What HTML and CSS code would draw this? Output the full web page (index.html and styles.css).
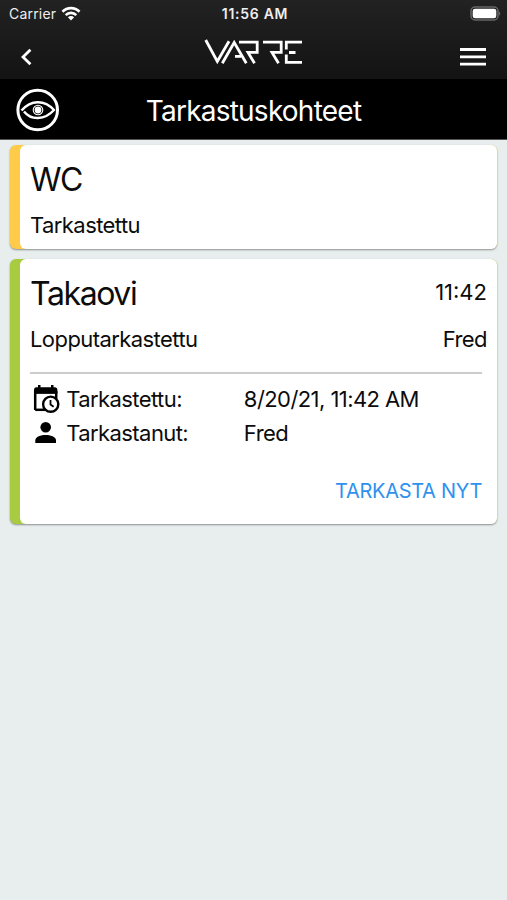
FILE: index.html
```html
<!DOCTYPE html>
<html lang="fi">
<head>
<meta charset="utf-8">
<title>Tarkastuskohteet</title>
<link rel="stylesheet" href="styles.css">
</head>
<body>
<header class="top">
  <div class="status">
    <div class="carrier"><span>Carrier</span>
      <svg width="20" height="16" viewBox="0 0 20 16"><g fill="none" stroke="#fff" stroke-width="2.7"><path d="M1.5 5.8C6.3 1 13.7 1 18.5 5.8"/><path d="M4.7 9.1C7.7 6.2 12.3 6.2 15.3 9.1"/></g><path fill="#fff" d="M6.9 11.3C8.7 9.7 11.3 9.7 13.1 11.3L10 14.5Z"/></svg>
    </div>
    <span class="clock">11:56 AM</span>
    <svg class="battery" width="31" height="16" viewBox="0 0 31 16"><rect x="1" y="1" width="27" height="13" rx="4" fill="none" stroke="#666" stroke-width="1.5"/><rect x="2.7" y="2.7" width="23.6" height="9.6" rx="2.4" fill="#fff"/><path d="M29.2 5.2q2 2.3 0 4.6z" fill="#777"/></svg>
  </div>
  <nav class="nav">
    <svg class="back" width="12" height="18" viewBox="0 0 12 18"><path d="M10.4 1.7L3 9L10.4 16.3" fill="none" stroke="#fff" stroke-width="2.8"/></svg>
    <svg class="logo" width="100" height="26" viewBox="0 0 100 26" aria-label="VARRE"><g fill="none" stroke="#fff" stroke-width="2.8"><path d="M1.7 1L13.3 22.5L25 2.2"/><path d="M18.3 24.3L30.2 3.5L42.3 24.3"/><path d="M31 17.4H37"/><path d="M35 3.2H53.2V13.4H44L50.5 24.3"/><path d="M59 3.2H77.2V13.4H68L74.5 24.3"/><path d="M98 3.2H82.3V10.5M85 13.5H91.5M82.3 15.5V23.3H98"/></g></svg>
    <svg class="menu" width="26" height="18" viewBox="0 0 26 18"><path d="M0 1.5H26M0 8.8H26M0 16.1H26" stroke="#fff" stroke-width="2.8"/></svg>
  </nav>
</header>
<div class="heading">
  <svg class="eye" width="44" height="44" viewBox="0 0 44 44"><g fill="none" stroke="#fff"><circle cx="21.7" cy="22" r="19.8" stroke-width="3"/><path d="M5.5 22.5C15 11.5 28.5 11.5 38 22C28.5 32.5 15 32.5 8 23.5" stroke-width="2.4"/><circle cx="22" cy="22" r="4.8" stroke-width="1.1"/></g><circle cx="22" cy="22" r="3.4" fill="#fff"/></svg>
  <h1>Tarkastuskohteet</h1>
</div>
<main class="list">
  <section class="card card-yellow">
    <div class="body">
      <div class="row row-title"><h2>WC</h2></div>
      <div class="row row-state"><span>Tarkastettu</span></div>
    </div>
  </section>
  <section class="card card-green">
    <div class="body">
      <div class="row row-title"><h2>Takaovi</h2><span class="time">11:42</span></div>
      <div class="row row-state"><span>Lopputarkastettu</span><span>Fred</span></div>
      <div class="details">
        <div class="detail">
          <svg width="30" height="30" viewBox="0 0 30 30"><path d="M5.2 26V8.2H26.2V14.7" fill="none" stroke="#000" stroke-width="2.5"/><path d="M5.2 25.8H15" stroke="#000" stroke-width="2.5"/><path d="M6 3.2H8V1H10.5V3.2H21V1H23.5V3.2H25Q27.4 3.2 27.4 5.7V9.7H4V5.7Q4 3.2 6 3.2Z"/><circle cx="20.7" cy="20.2" r="7.6" fill="#fff" stroke="#000" stroke-width="2.4"/><path d="M20.5 16V20.5L23.6 22.7" fill="none" stroke="#000" stroke-width="1.8"/></svg>
          <span>Tarkastettu:</span><span>8/20/21, 11:42 AM</span>
        </div>
        <div class="detail">
          <svg width="30" height="30" viewBox="0 0 30 30"><circle cx="15.7" cy="9.3" r="5.3"/><path d="M5.3 25V22.5C5.3 18.5 11 17 15.6 17S26 18.5 26 22.5V25Z"/></svg>
          <span>Tarkastanut:</span><span>Fred</span>
        </div>
      </div>
      <div class="actions"><a class="action">TARKASTA NYT</a></div>
    </div>
  </section>
</main>
</body>
</html>
```
FILE: styles.css
```css
* { box-sizing: border-box; }
body { margin: 0; min-height: 900px; background: #e8eeee; color: #0c0c0c; font: 22px/28px Inter, "Liberation Sans", sans-serif; letter-spacing: -.57px; }
svg { display: block; flex: none; }
h1, h2 { margin: 0; font-weight: 400; white-space: nowrap; }
.top { height: 79px; background: linear-gradient(#222, #131313); color: #eee; }
.status { height: 28px; padding: 0 6px 0 9px; display: grid; grid-template-columns: 1fr auto 1fr; align-items: center; font-size: 14px; line-height: 18px; letter-spacing: .2px; }
.carrier { display: flex; align-items: center; gap: 5px; }
.clock { font-weight: 600; letter-spacing: .7px; }
.battery { justify-self: end; }
.nav { height: 51px; padding: 0 21px 0 20px; display: grid; grid-template-columns: 1fr auto 1fr; align-items: center; }
.back { margin-top: 7px; }
.logo { margin: 0 -1px 3px 1px; }
.menu { justify-self: end; margin-top: 7px; }
.heading { height: 61px; background: #000; color: #fff; padding: 0 16px; display: grid; grid-template-columns: 44px 1fr 44px; align-items: center; border-bottom: 1px solid #555; }
.eye { margin-top: 1px; }
.heading h1 { font-size: 28px; line-height: 36px; text-align: center; letter-spacing: -.77px; padding-top: 4px; }
.list { padding: 5px 10px; display: grid; gap: 10px; }
.card { padding-left: 10.4px; border-radius: 6px; box-shadow: 0 1px 2px rgba(0,0,0,.4); }
.card-yellow { height: 104px; background: #ffcb48; }
.card-green { height: 265px; background: #a8cb42; }
.body { height: 100%; background: #fff; border-radius: 6px; padding: 14px 10px 0 9.6px; }
.row { display: flex; justify-content: space-between; align-items: center; white-space: nowrap; }
.row-title { height: 40px; }
.row-title h2 { font-size: 32px; line-height: 40px; letter-spacing: -1.4px; padding-top: 2px; }
.time { letter-spacing: 0; padding-bottom: 2px; }
.row-state { height: 28px; margin-top: 12px; }
.details { margin: 19px 5px 0 0; padding-top: 8px; border-top: 2px solid #ccc; }
.detail { height: 34px; display: grid; grid-template-columns: 30px 171.5px 1fr; column-gap: 6.2px; white-space: nowrap; align-items: center; }
.actions { display: flex; justify-content: flex-end; padding: 27px 5px 0 0; }
.action { color: #2f91ef; font-size: 20px; letter-spacing: -.3px; }
```
